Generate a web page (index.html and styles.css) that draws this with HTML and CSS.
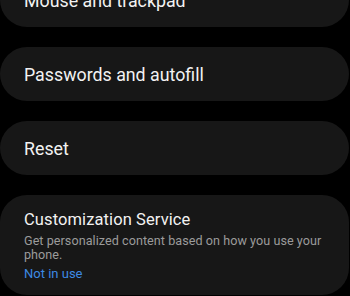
FILE: index.html
```html
<!DOCTYPE html>
<html>
  <head>
    <meta charset="utf-8">
    <title>Settings</title>
    <link rel="stylesheet" href="styles.css">
  </head>
  <body>
    <div class="list">
      <div class="card row"><span class="title">Mouse and trackpad</span></div>
      <div class="card row"><span class="title">Passwords and autofill</span></div>
      <div class="card row"><span class="title">Reset</span></div>
      <div class="card tall">
        <div class="title big">Customization Service</div>
        <div class="sub">Get personalized content based on how you use your phone.</div>
        <div class="status">Not in use</div>
      </div>
    </div>
  </body>
</html>
```

FILE: styles.css
```css
body    {margin:0; background:#000; font-family:Roboto,"Liberation Sans",sans-serif; overflow:hidden}
.list   {display:flex; flex-direction:column; gap:20px; margin-top:-27px; width:349px}
.card   {background:#171717; border-radius:27px; box-sizing:border-box; padding:0 24px}
.row    {height:54px; display:flex; align-items:center; padding-top:1px}
.tall   {padding-top:14px; padding-bottom:12px}
.title  {color:#f2f2f2; font-size:17.8px; line-height:22px}
.big    {font-size:16.5px; letter-spacing:0.1px}
.sub    {color:#9b9b9b; font-size:12.6px; line-height:14px; margin-top:3px; letter-spacing:0.05px}
.status {color:#3d8ae3; font-size:13px; line-height:18px; margin-top:3px}
```
